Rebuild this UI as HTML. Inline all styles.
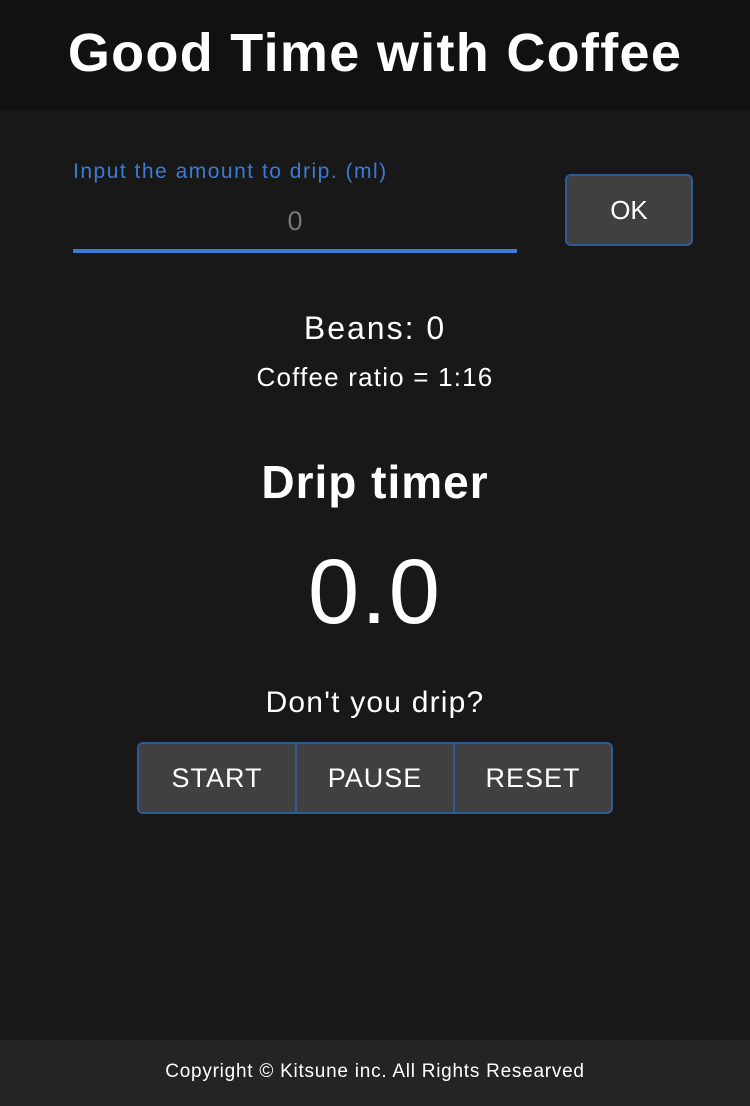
<!DOCTYPE html>
<html><head><style>
body{margin:0;width:750px;height:1106px;background:#181818;font-family:"Liberation Sans",sans-serif;color:#fff;position:relative;overflow:hidden}
.hdr{position:absolute;top:0;left:0;width:750px;height:110px;background:#111;text-align:center}
.hdr h1{margin:0;font-size:54px;font-weight:bold;line-height:106px;letter-spacing:1.3px}
.abs{position:absolute;white-space:nowrap}
.c{left:0;width:750px;text-align:center}
.btns{position:absolute;left:137px;top:742px;width:476px;height:72px;border:2px solid #2f5a94;border-radius:6px;background:#404040;display:flex;box-sizing:border-box;overflow:hidden}
.btns div{flex:1;text-align:center;line-height:68px;font-size:27px;letter-spacing:1px;border-left:2px solid #2f5a94}
.btns div:first-child{border-left:none}
.ft{position:absolute;left:0;top:1040px;width:750px;height:66px;background:#242424;text-align:center;line-height:64px;font-size:19px;letter-spacing:0.75px}
</style></head><body>
<div class="hdr"><h1>Good Time with Coffee</h1></div>
<div class="abs" style="left:73px;top:160px;font-size:21px;color:#3a7bd5;letter-spacing:1.5px">Input the amount to drip. (ml)</div>
<div class="abs" style="left:73px;top:206px;width:444px;text-align:center;font-size:27px;color:#777">0</div>
<div class="abs" style="left:73px;top:249px;width:444px;height:4px;background:#3a7bd5"></div>
<div class="abs" style="left:565px;top:174px;width:128px;height:72px;box-sizing:border-box;border:2px solid #2f5a94;border-radius:6px;background:#404040;text-align:center;line-height:68px;font-size:26px">OK</div>
<div class="abs c" style="top:310px;font-size:32px;letter-spacing:2px">Beans: 0</div>
<div class="abs c" style="top:362px;font-size:26px;letter-spacing:1.2px">Coffee ratio = 1:16</div>
<div class="abs c" style="top:455px;font-size:46px;font-weight:bold;letter-spacing:1px">Drip timer</div>
<div class="abs c" style="top:540px;font-size:92px;letter-spacing:2px">0.0</div>
<div class="abs c" style="top:686px;font-size:30px;letter-spacing:1.2px">Don't you drip?</div>
<div class="btns"><div>START</div><div>PAUSE</div><div>RESET</div></div>
<div class="ft">Copyright © Kitsune inc. All Rights Researved</div>
</body></html>
